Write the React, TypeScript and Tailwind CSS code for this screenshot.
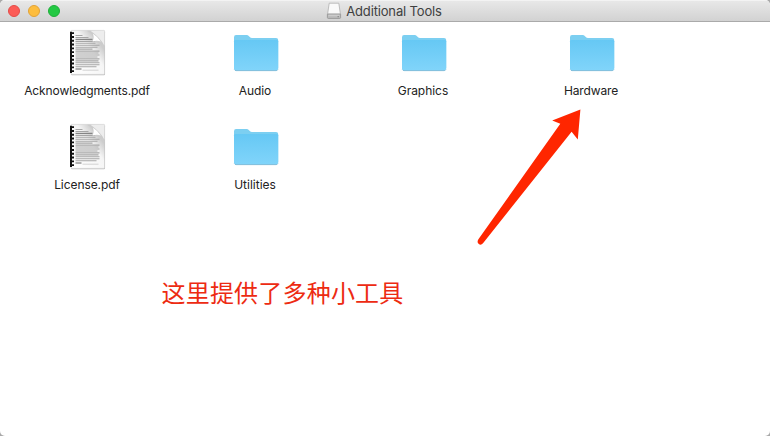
type Item = { name: string; kind: 'pdf' | 'folder'; tracking: string };

const items: Item[] = [
  { name: 'Acknowledgments.pdf', kind: 'pdf', tracking: 'tracking-[-0.1px]' },
  { name: 'Audio', kind: 'folder', tracking: 'tracking-[-0.1px]' },
  { name: 'Graphics', kind: 'folder', tracking: 'tracking-[-0.05px]' },
  { name: 'Hardware', kind: 'folder', tracking: 'tracking-[-0.15px]' },
  { name: 'License.pdf', kind: 'pdf', tracking: 'tracking-[-0.08px]' },
  { name: 'Utilities', kind: 'folder', tracking: 'tracking-[0px]' },
];

function FolderIcon() {
  return (
    <svg width="48" height="48" viewBox="0 0 48 48" className="block">
      <defs>
        <linearGradient id="folderFront" x1="0" y1="0" x2="0" y2="1">
          <stop offset="0" stopColor="#66c8f4" />
          <stop offset="1" stopColor="#80d4fa" />
        </linearGradient>
      </defs>
      <path d="M3 8.2Q3 6 5 6H15.5Q17 6 18 7.2L19 8.3Q19.6 9 21 9H45Q47.2 9 47.2 11V39H3Z" fill="#7ccff1" />
      <path d="M3 12.2Q3 11 4.5 11H45.7Q47.2 11 47.2 12.2V39.5Q47.2 41 45.7 41H4.5Q3 41 3 39.5Z" fill="url(#folderFront)" />
      <path d="M3.4 40.6Q4 41.6 5 41.6H45.2Q46.3 41.6 46.9 40.6" fill="none" stroke="#68b2d6" strokeWidth="0.9" />
    </svg>
  );
}

// Widths of the printed lines on the page, top to bottom.
const lines = [7, 13, 17, 20, 20, 24, 22, 17, 24, 23, 24, 22, 24, 23, 24, 24, 21];

function PdfIcon() {
  return (
    <svg width="48" height="48" viewBox="0 0 48 48" className="block">
      <defs>
        <linearGradient id="pageShade" x1="0" y1="1" x2="1" y2="0">
          <stop offset="0" stopColor="#fff" />
          <stop offset="0.58" stopColor="#f5f5f5" />
          <stop offset="0.78" stopColor="#cccccc" />
          <stop offset="1" stopColor="#f8f8f8" />
        </linearGradient>
      </defs>
      <rect x="8" y="2.4" width="34" height="43.9" rx="1" fill="#bdbdbd" />
      <rect x="8" y="1.4" width="33.6" height="44" rx="0.8" fill="url(#pageShade)" stroke="#cbcbcb" strokeWidth="0.6" />
      {lines.map((w, i) => (
        <path
          key={i}
          d={`M12.5 ${6.5 + i * 1.95}h${w}`}
          stroke={i === 2 ? '#858585' : '#a6a6a6'}
          strokeWidth="1.1"
        />
      ))}
      <path d="M12.5 40h6" stroke="#555" strokeWidth="0.9" />
      <path d="M19.5 41.2h16" stroke="#bbb" strokeWidth="0.6" />
      <path d="M24 1.7H41.3V20Q39.5 13.5 30 12.3Q31.8 5.5 24 1.7Z" fill="#cccccc" />
      <path d="M27.5 1.7H41.3V16.5Q37.5 8.8 27.5 1.7Z" fill="#ededed" />
      <path d="M30 4.8Q31.5 9 29.5 12.4Q34.5 10.8 37.8 12.6Q35 8 30 4.8Z" fill="#ffffff" />
      <path d="M8 2.7V44" stroke="#111" strokeWidth="2" />
      <path d="M9 3.2V44" stroke="#111" strokeWidth="4" strokeDasharray="1.9 1.9" />
    </svg>
  );
}

function DriveIcon() {
  return (
    <svg width="16" height="18" viewBox="0 0 16 18" className="block">
      <path d="M3.2 1.2H12.8L14.4 12H1.6Z" fill="#fafafa" stroke="#b0b0b0" strokeWidth="0.8" />
      <path d="M1.4 12.2H14.6V15.6Q14.6 16.4 13.8 16.4H2.2Q1.4 16.4 1.4 15.6Z" fill="#bdbdbd" stroke="#909090" strokeWidth="0.8" />
      <path d="M2.5 13.2H13.5" stroke="#d9d9d9" strokeWidth="0.8" />
      <path d="M11.5 14.7H13" stroke="#777" strokeWidth="0.8" />
    </svg>
  );
}

export default function App() {
  return (
    <div className="h-[436px] w-[770px] overflow-hidden bg-[#a9a9a9] font-['Inter','Noto_Sans_CJK_SC',sans-serif]">
      <div className="relative flex h-full flex-col overflow-hidden rounded-[5px] bg-white">
        <header className="grid h-[22px] shrink-0 grid-cols-[1fr_auto_1fr] items-center border-b border-[#aaaaaa] bg-linear-to-b from-[#e9e9e9] to-[#d2d2d2] shadow-[inset_0_1px_0_#f3f3f3]">
          <div className="flex gap-2 pl-2">
            <span className="size-3 rounded-full border border-[#e34c48] bg-[#fc5c57]" />
            <span className="size-3 rounded-full border border-[#e1a237] bg-[#fdbd3e]" />
            <span className="size-3 rounded-full border border-[#1fae3a] bg-[#24c944]" />
          </div>
          <div className="flex items-center gap-1 pt-px pr-[2px]">
            <DriveIcon />
            <h1 className="text-[13px] leading-4 tracking-[-0.15px] whitespace-nowrap text-[#404040]">Additional Tools</h1>
          </div>
        </header>
        <main className="grid grid-cols-[repeat(4,168px)] auto-rows-[94px] pt-[7px] pl-[3px]">
          {items.map((item) => (
            <div key={item.name} className="flex flex-col items-center">
              {item.kind === 'folder' ? <FolderIcon /> : <PdfIcon />}
              <span className={`mt-[6px] text-[12px] leading-4 whitespace-nowrap text-[#222] ${item.tracking}`}>
                {item.name}
              </span>
            </div>
          ))}
        </main>
        <p className="mt-[57px] pl-[161.5px] font-['Noto_Sans_CJK_SC',sans-serif] text-[24px] leading-9 tracking-[0.2px] text-[#ed2b12]">
          这里提供了多种小工具
        </p>
        <svg className="pointer-events-none absolute top-[100px] left-[470px]" width="120" height="150" viewBox="470 100 120 150">
          <path d="M580.4 109.5L577.8 139.5L571.6 131.8L483 243.3Q480.8 245.7 478.6 243.8Q476.7 242 478.4 239.3L560.3 123.8L552.2 120.6Z" fill="#ff2600" />
        </svg>
      </div>
    </div>
  );
}
